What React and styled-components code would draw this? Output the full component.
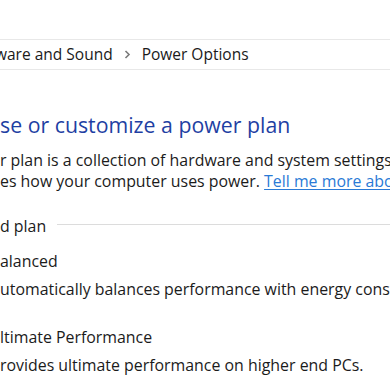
import React from "react";
import styled, { createGlobalStyle } from "styled-components";

const GlobalStyle = createGlobalStyle`
  html, body {
    margin: 0;
    padding: 0;
    background: #ffffff;
  }
  body {
    font-family: "Open Sans", "Noto Sans", "Liberation Sans", sans-serif;
    color: #1b1b1b;
    overflow: hidden;
  }
`;

const Page = styled.div`
  width: 390px;
  height: 390px;
  overflow: hidden;
  padding-top: 39px;
  box-sizing: border-box;
`;

const Breadcrumb = styled.nav`
  display: flex;
  align-items: center;
  gap: 11px;
  height: 29px;
  border-top: 1px solid #e8e8e8;
  border-bottom: 1px solid #e8e8e8;
  font-size: 15.5px;
  white-space: nowrap;
  color: #1a1a1a;
`;

const Crumb = styled.span`
  margin-left: ${(p) => p.$shift || 0}px;
  padding-bottom: 2px;
`;

const Chevron = styled.svg`
  width: 7px;
  height: 9px;
  flex: none;
`;

const Content = styled.main`
  padding-top: 41px;
  white-space: nowrap;
`;

const Title = styled.h1`
  margin: 0 0 11px;
  font-size: 21.3px;
  font-weight: 400;
  color: #1f3fa3;
  line-height: 28px;
`;

const Text = styled.p`
  margin: 0;
  font-size: 15.9px;
  line-height: 21px;
`;

const MoreLink = styled.a`
  color: #2a7ad6;
  text-decoration: underline;
  text-underline-offset: 2px;
`;

const Group = styled.section`
  margin-top: 23px;
`;

const Legend = styled.div`
  display: flex;
  align-items: center;
  gap: 11px;
  font-size: 15.9px;
  line-height: 22px;

  &::after {
    content: "";
    flex: 1;
    height: 1px;
    background: #dcdcdc;
    margin-top: -4px;
  }
`;

const Plan = styled.div`
  margin-top: ${(p) => p.$gap}px;
  font-size: 15.9px;
`;

const PlanName = styled.div`
  line-height: 24px;
`;

const PlanDesc = styled.div`
  margin-top: 2px;
  line-height: 28px;
`;

export default function App() {
  return (
    <>
      <GlobalStyle />
      <Page>
        <Breadcrumb>
          <Crumb $shift={-5}>ware and Sound</Crumb>
          <Chevron viewBox="0 0 7 9">
            <path d="M1.5 1 L5 4.5 L1.5 8" fill="none" stroke="#7a7a7a" strokeWidth="1.6" />
          </Chevron>
          <Crumb>Power Options</Crumb>
        </Breadcrumb>
        <Content>
          <Title>se or customize a power plan</Title>
          <Text>r plan is a collection of hardware and system settings (like display</Text>
          <Text>
            es how your computer uses power. <MoreLink href="#">Tell me more about power plans</MoreLink>
          </Text>
          <Group>
            <Legend>d plan</Legend>
            <Plan $gap={12}>
              <PlanName>alanced</PlanName>
              <PlanDesc>utomatically balances performance with energy consumption on capable hardware.</PlanDesc>
            </Plan>
            <Plan $gap={22}>
              <PlanName>ltimate Performance</PlanName>
              <PlanDesc>rovides ultimate performance on higher end PCs.</PlanDesc>
            </Plan>
          </Group>
        </Content>
      </Page>
    </>
  );
}
